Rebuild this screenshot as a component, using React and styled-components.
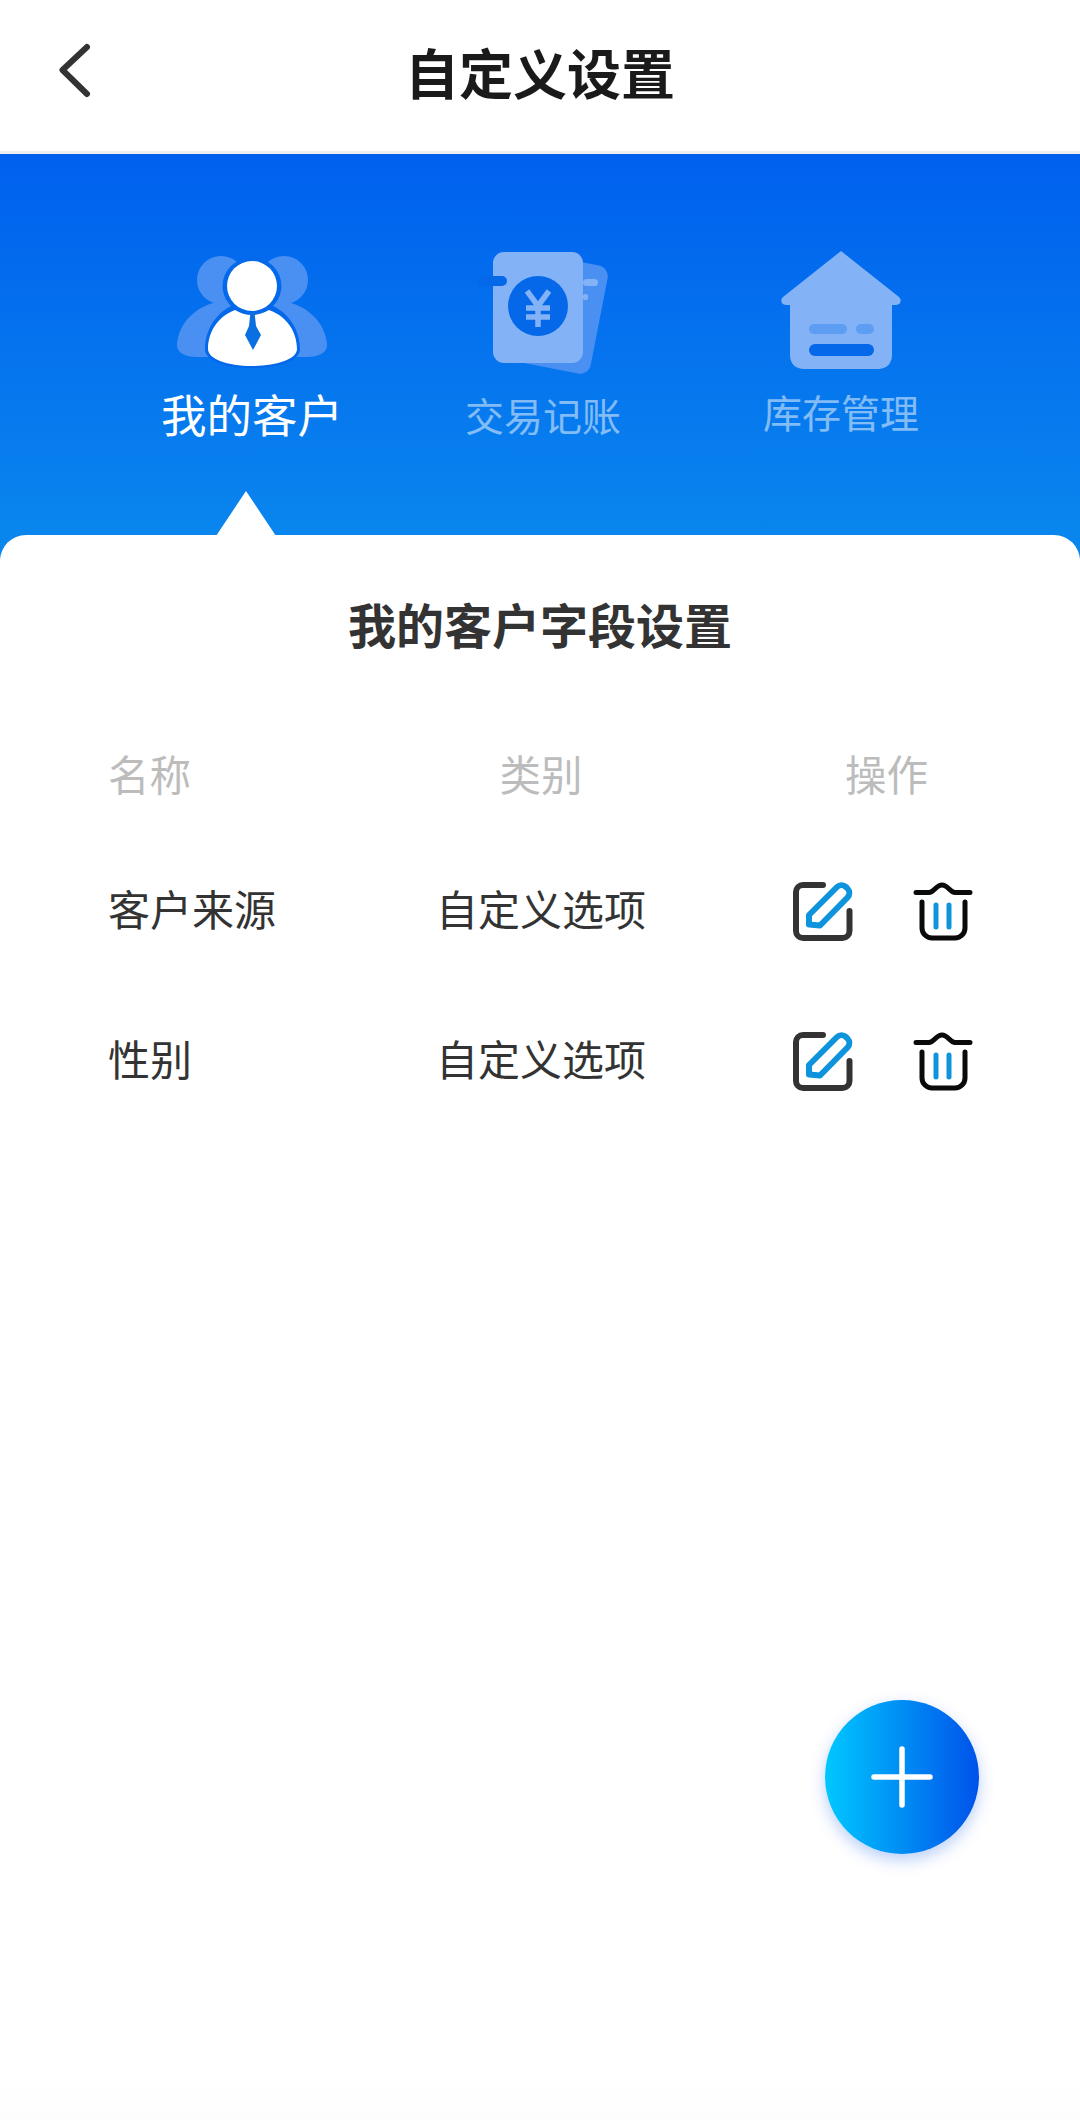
import React from "react";
import styled, { createGlobalStyle } from "styled-components";

const Global = createGlobalStyle`
  html, body { margin: 0; padding: 0; background: #fff; }
  body { font-family: "Noto Sans CJK SC", "Noto Sans", sans-serif; }
`;
const Page = styled.div`
  position: relative; width: 1080px; height: 2120px; overflow: hidden;
  background: linear-gradient(#fff 0, #fff 2080px, #fdfdfd 100%);
`;
const Header = styled.header`
  position: relative; height: 151px; border-bottom: 3px solid #efefef;
  display: flex; align-items: center; justify-content: center; background: #fff;
`;
const BackBtn = styled.svg`
  position: absolute; left: 56px; top: 40px; width: 38px; height: 60px;
`;
const Title = styled.h1`
  margin: 0 0 8px; font-size: 54px; line-height: 64px; font-weight: 700; color: #1a1a1a; letter-spacing: 0;
`;
const Banner = styled.section`
  height: 405px; box-sizing: border-box; padding: 95px 0 0 0;
  background: linear-gradient(180deg, #0060ee 0%, #0a88ee 100%);
  display: grid; grid-template-columns: 102px 300px 282px 314px; align-content: start;
`;
const Tab = styled.div`
  grid-column: ${(p) => p.$col}; display: flex; flex-direction: column; align-items: center;
  color: ${(p) => (p.$active ? "#fff" : "rgba(255,255,255,.5)")};
`;
const TabIcon = styled.svg`
  width: ${(p) => p.$w}px; height: 125px; display: block; flex: none;
`;
const TabLabel = styled.span`
  font-size: ${(p) => p.$size}px; line-height: 60px; margin-top: ${(p) => p.$mt}px; white-space: nowrap;
`;
const Card = styled.section`
  position: relative; margin-top: -24px; height: 600px; background: #fff;
  border-radius: 26px 26px 0 0; padding: 0 108px; box-sizing: border-box;
  &::before {
    content: ""; position: absolute; left: 216px; top: -44px; width: 60px; height: 45px;
    background: #fff; clip-path: polygon(50% 0, 100% 100%, 0 100%);
  }
`;
const Heading = styled.h2`
  margin: 0; padding-top: 53px; text-align: center; font-size: 48px; line-height: 70px; font-weight: 700; color: #333;
`;
const Grid = styled.div`
  display: grid; grid-template-columns: 300px 266px 1fr; align-items: center; height: ${(p) => p.$h}px;
  margin-top: ${(p) => p.$mt || 0}px;
`;
const HeadCell = styled.div`
  font-size: 41.5px; line-height: 60px; color: #bcbcbc;
  text-align: ${(p) => p.$align || "left"};
  padding-right: ${(p) => p.$pr || 0}px;
`;
const Cell = styled.div`
  font-size: 42px; line-height: 60px; color: #333; text-align: ${(p) => p.$align || "left"}; white-space: nowrap;
`;
const Ops = styled.div`
  display: flex; justify-content: flex-end; align-items: center; gap: 54px; margin-right: -4px; padding-top: 6px;
`;
const OpIcon = styled.svg`
  width: 66px; height: 66px; display: block;
`;
const Fab = styled.button`
  position: absolute; left: 825px; top: 1700px; width: 154px; height: 154px; padding: 0; border: 0; border-radius: 50%;
  background: linear-gradient(90deg, #00c8ff 0%, #0052ea 100%);
  box-shadow: 0 6px 16px rgba(0, 82, 234, .28);
  display: flex; align-items: center; justify-content: center;
`;

const CustomerIcon = () => (
  <TabIcon $w={160} viewBox="172 250 160 125">
    <g fill="#4a90f2">
      <circle cx="221" cy="281" r="24" />
      <circle cx="284" cy="281" r="24" />
      <path d="M177 345c2-22 20-38 40-42h70c20 4 38 20 40 42 1 8-8 13-20 13H197c-12 0-21-5-20-13z" />
    </g>
    <path d="M252 259a28 28 0 0 0-21 48c-16 8-26 25-26 43 0 12 20 19 47 19s48-7 48-19c0-18-10-35-27-43a28 28 0 0 0-21-48z" fill="#0468ea" />
    <circle cx="252" cy="287" r="25" fill="#fff" />
    <path d="M208 350c0-18 11-33 27-39 5 3 11 5 17 5s12-2 17-5c17 6 28 21 28 39 0 10-20 17-45 17s-44-7-44-17z" fill="#fff" />
    <path d="M250.500 313h4l1.500 14 5 9-8 15-8-15 4-9z" fill="#0a6fe0" />
  </TabIcon>
);
const LedgerIcon = () => (
  <TabIcon $w={130} viewBox="478 250 130 125">
    <rect x="510" y="259" width="90" height="110" rx="11" fill="#4a90f2" transform="rotate(11 555 314)" />
    <rect x="493" y="253" width="90" height="111" rx="11" fill="#83b3f6" />
    <rect x="477" y="277" width="30" height="10" rx="5" fill="#0568e8" />
    <rect x="583" y="280" width="15" height="7" rx="3.500" fill="#83b3f6" />
    <rect x="583" y="295" width="5" height="6" rx="2" fill="#83b3f6" />
    <circle cx="538" cy="307" r="30" fill="#0568e8" />
    <path d="M527 292l11 15 11-15M526 309h24M526 318h24M538 306v22" fill="none" stroke="#83b3f6" strokeWidth="5.500" />
  </TabIcon>
);
const HouseIcon = () => (
  <TabIcon $w={130} viewBox="776 248 130 125">
    <path d="M841 250l58 46c3 3 2 8-3 8h-4v50c0 9-6 14-14 14h-74c-8 0-14-5-14-14v-50h-4c-5 0-6-5-3-8z" fill="#83b3f6" />
    <rect x="809" y="323" width="38" height="10" rx="5" fill="#5d9df3" />
    <rect x="856" y="323" width="18" height="10" rx="5" fill="#5d9df3" />
    <rect x="809" y="343" width="65" height="12" rx="6" fill="#0568e8" />
  </TabIcon>
);
const EditIcon = () => (
  <OpIcon viewBox="790 878 66 66">
    <path d="M823 885h-20a7 7 0 0 0-7 7v39a7 7 0 0 0 7 7h39.500a7 7 0 0 0 7-7V911" fill="none" stroke="#333" strokeWidth="6" strokeLinecap="round" />
    <path d="M809 915l28-28a6.500 6.500 0 0 1 9 0l1.500 1.500a6.500 6.500 0 0 1 0 9L820 925.500l-11 -1z" fill="none" stroke="#0e94dc" strokeWidth="6" strokeLinejoin="round" />
  </OpIcon>
);
const TrashIcon = () => (
  <OpIcon viewBox="910 878 66 66">
    <path d="M916 892.500h13c5 0 7-7.500 13-7.500h0c6 0 8 7.500 13 7.500h15" fill="none" stroke="#0a0a0a" strokeWidth="5" strokeLinecap="round" strokeLinejoin="round" />
    <path d="M922 902v26a10 10 0 0 0 10 10h23a10 10 0 0 0 10-10v-26" fill="none" stroke="#0a0a0a" strokeWidth="5" strokeLinecap="round" />
    <path d="M936 905v22M949 905v22" fill="none" stroke="#0e94dc" strokeWidth="5" strokeLinecap="round" />
  </OpIcon>
);

const rows = [
  { name: "客户来源", type: "自定义选项" },
  { name: "性别", type: "自定义选项" },
];

export default function App() {
  return (
    <Page>
      <Global />
      <Header>
        <BackBtn viewBox="56 40 38 60">
          <path d="M87 47L62.500 70 87 94" fill="none" stroke="#333" strokeWidth="6" strokeLinecap="round" strokeLinejoin="round" />
        </BackBtn>
        <Title>自定义设置</Title>
      </Header>
      <Banner>
        <Tab $col={2} $active>
          <CustomerIcon />
          <TabLabel $size={45.500} $mt={9}>我的客户</TabLabel>
        </Tab>
        <Tab $col={3}>
          <LedgerIcon />
          <TabLabel $size={39} $mt={10}>交易记账</TabLabel>
        </Tab>
        <Tab $col={4}>
          <HouseIcon />
          <TabLabel $size={39} $mt={7}>库存管理</TabLabel>
        </Tab>
      </Banner>
      <Card>
        <Heading>我的客户字段设置</Heading>
        <Grid $h={60} $mt={85}>
          <HeadCell>名称</HeadCell>
          <HeadCell $align="center">类别</HeadCell>
          <HeadCell $align="right" $pr={44}>操作</HeadCell>
        </Grid>
        <Grid $h={100} $mt={55}>
          <Cell>{rows[0].name}</Cell>
          <Cell $align="center">{rows[0].type}</Cell>
          <Ops><EditIcon /><TrashIcon /></Ops>
        </Grid>
        <Grid $h={100} $mt={50}>
          <Cell>{rows[1].name}</Cell>
          <Cell $align="center">{rows[1].type}</Cell>
          <Ops><EditIcon /><TrashIcon /></Ops>
        </Grid>
      </Card>
      <Fab aria-label="add">
        <svg width="70" height="70" viewBox="0 0 70 70">
          <path d="M35 7v56M7 35h56" stroke="#fff" strokeWidth="5.500" strokeLinecap="round" />
        </svg>
      </Fab>
    </Page>
  );
}
